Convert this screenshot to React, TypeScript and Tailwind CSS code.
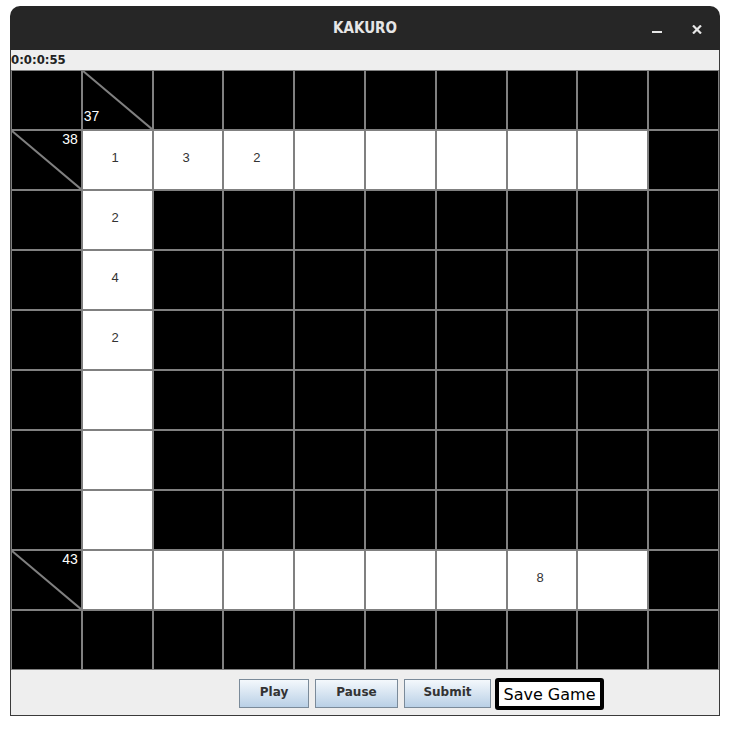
import React from "react";

type Cell =
  | { kind: "black" }
  | { kind: "white"; value?: string }
  | { kind: "clue"; across?: string; down?: string };

const B: Cell = { kind: "black" };
const W = (value?: string): Cell => ({ kind: "white", value });

const row = (cells: Cell[]) => cells;

const grid: Cell[][] = [
  row([B, { kind: "clue", down: "37" }, B, B, B, B, B, B, B, B]),
  row([{ kind: "clue", across: "38" }, W("1"), W("3"), W("2"), W(), W(), W(), W(), W(), B]),
  row([B, W("2"), B, B, B, B, B, B, B, B]),
  row([B, W("4"), B, B, B, B, B, B, B, B]),
  row([B, W("2"), B, B, B, B, B, B, B, B]),
  row([B, W(), B, B, B, B, B, B, B, B]),
  row([B, W(), B, B, B, B, B, B, B, B]),
  row([B, W(), B, B, B, B, B, B, B, B]),
  row([{ kind: "clue", across: "43" }, W(), W(), W(), W(), W(), W(), W("8"), W(), B]),
  row([B, B, B, B, B, B, B, B, B, B]),
];

const GridCell: React.FC<{ cell: Cell }> = ({ cell }) => {
  if (cell.kind === "white") {
    return (
      <div className="flex items-center justify-center border border-[#808080] bg-white pb-[5px] pr-[4px] text-[13px] text-[#333] font-['Liberation_Sans',sans-serif]">
        {cell.value}
      </div>
    );
  }
  if (cell.kind === "clue") {
    return (
      <div className="relative border border-[#808080] bg-black text-[14px] leading-none text-white font-['Liberation_Sans',sans-serif]">
        <svg className="absolute inset-0 h-full w-full" preserveAspectRatio="none" viewBox="0 0 100 100">
          <line x1="0" y1="0" x2="100" y2="100" stroke="#808080" strokeWidth="2" vectorEffect="non-scaling-stroke" />
        </svg>
        {cell.across && <span className="absolute right-[3px] top-[1px]">{cell.across}</span>}
        {cell.down && <span className="absolute bottom-[6px] left-[1px]">{cell.down}</span>}
      </div>
    );
  }
  return <div className="border border-[#808080] bg-black" />;
};

const App: React.FC = () => {
  return (
    <div className="h-[731px] w-[732px] bg-white pl-[10px] pt-[6px]">
      <div className="w-[710px]">
        {/* title bar */}
        <div className="relative flex h-[44px] items-center justify-center rounded-t-[10px] bg-[#262626]">
          <span className="text-[15px] font-bold text-[#e6e6e6] font-['Liberation_Sans_Narrow','DejaVu_Sans_Condensed',sans-serif]">
            KAKURO
          </span>
          <div className="absolute left-[642px] top-[25px] h-[2px] w-[10px] bg-[#e6e6e6]" />
          <svg className="absolute left-[682px] top-[19px]" width="10" height="9" viewBox="0 0 10 9">
            <path d="M1 0.5 L9 8.5 M9 0.5 L1 8.5" stroke="#e6e6e6" strokeWidth="2.2" />
          </svg>
        </div>

        <div className="border-x border-b border-[#3a3a3a]">
          {/* timer */}
          <div className="flex h-[20px] items-center bg-[#eeeeee] text-[13px] font-bold text-[#222] font-['DejaVu_Sans_Condensed','DejaVu_Sans',sans-serif]">
            0:0:0:55
          </div>

          {/* board */}
          <div className="grid h-[600px] grid-cols-10 grid-rows-10 bg-black">
            {grid.flat().map((cell, i) => (
              <GridCell key={i} cell={cell} />
            ))}
          </div>

          {/* buttons */}
          <div className="flex h-[45px] items-start bg-[#eeeeee] pl-[228px] pt-[8px]">
            <div className="mt-[1px] flex gap-[6px]">
              {["Play", "Pause", "Submit"].map((label) => (
                <button
                  key={label}
                  className="flex h-[29px] items-center justify-center border border-[#7a8a99] bg-gradient-to-b from-[#f4f8fc] to-[#b9d0e6] pb-[3px] text-[12px] font-bold text-[#333] font-['DejaVu_Sans',sans-serif]"
                  style={{ width: label === "Play" ? 70 : label === "Pause" ? 83 : 87 }}
                >
                  {label}
                </button>
              ))}
            </div>
            <button className="ml-[4px] flex h-[32px] w-[109px] items-center justify-center rounded-[3px] border-[4px] border-black bg-white pt-[2px] text-[16px] text-black font-['DejaVu_Sans',sans-serif]">
              Save Game
            </button>
          </div>
        </div>
      </div>
    </div>
  );
};

export default App;
